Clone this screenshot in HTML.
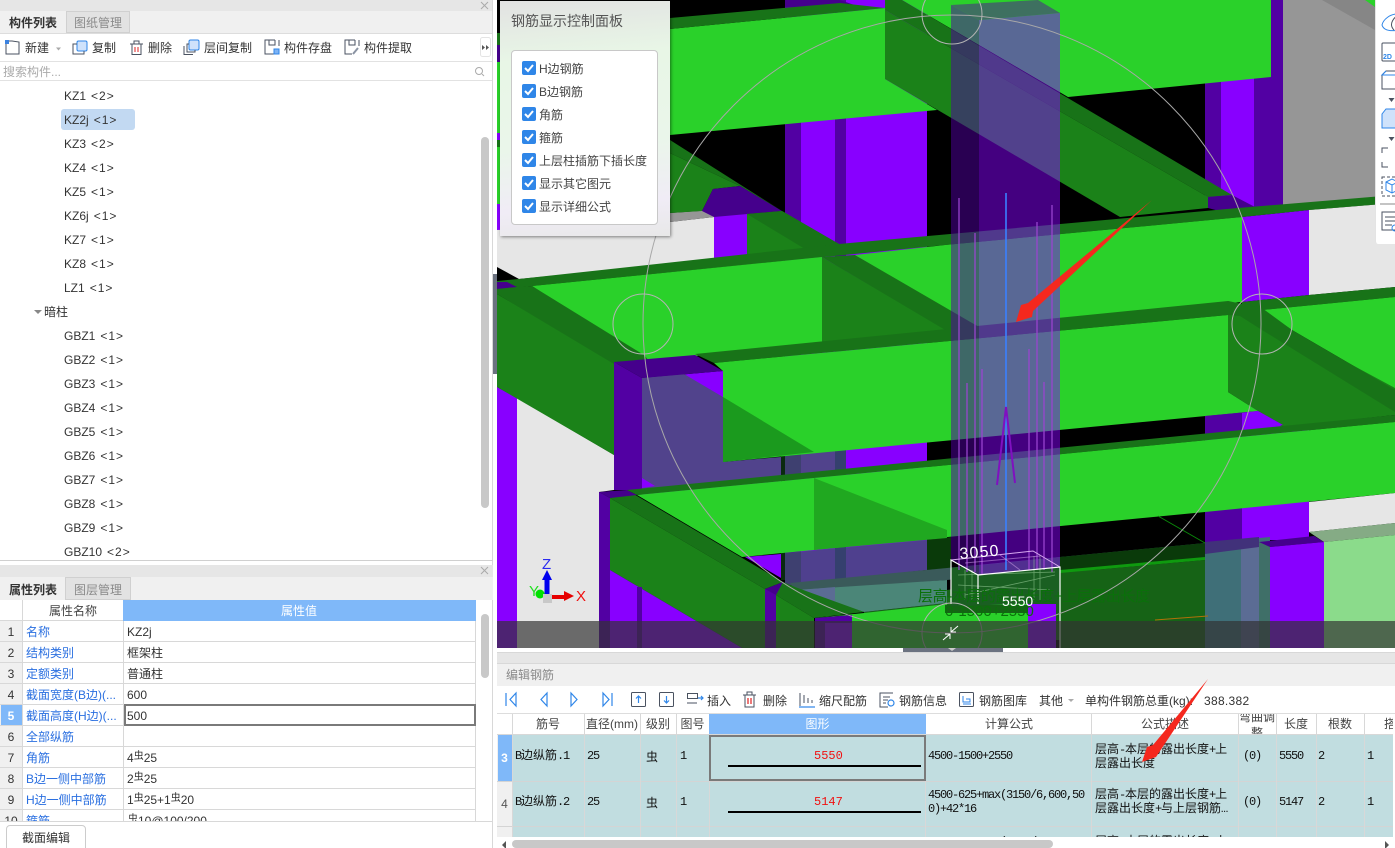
<!DOCTYPE html>
<html><head><meta charset="utf-8"><style>
html,body{margin:0;padding:0;background:#fff}
#r{position:relative;width:1395px;height:848px;overflow:hidden;background:#fff;font-family:"Liberation Sans","Noto Sans CJK SC",sans-serif;font-size:12px;color:#333}
.t{position:absolute;white-space:nowrap;line-height:16px;font-size:12px}
.b{position:absolute}
.tr{color:#333}.tr span{letter-spacing:1px;margin-left:5px}
.bl{color:#2a6fe0}
.cell{position:absolute;white-space:nowrap;font-family:"Liberation Mono","WenQuanYi Zen Hei",monospace;font-size:12px;line-height:14px;color:#111}
.m{letter-spacing:-1.2px}
.hd{position:absolute;top:714px;height:21px;line-height:21px;text-align:center;font-size:12px;color:#444;overflow:hidden}
.cb{position:absolute;left:522px;width:14px;height:14px;background:#2f86e8;border-radius:2px}
.lb{position:absolute;left:539px;font-size:12px;line-height:16px;color:#444;white-space:nowrap}
sup{font-size:10px;line-height:0;vertical-align:3px}
</style></head><body><div id="r">

<svg class="b" style="left:0;top:0" width="1395" height="848" viewBox="0 0 1395 848">
<clipPath id="v"><rect x="497" y="0" width="898" height="648"/></clipPath>
<g clip-path="url(#v)">
<rect x="497" y="0" width="898" height="648" fill="#000"/>
<!-- left sliver -->
<rect x="497" y="33" width="3" height="12" fill="#187318"/>
<rect x="497" y="45" width="3" height="17" fill="#45008c"/>
<rect x="497" y="62" width="3" height="71" fill="#2ad12a"/>
<rect x="497" y="133" width="3" height="7" fill="#8800ff"/>
<rect x="497" y="140" width="3" height="7" fill="#187318"/>
<rect x="497" y="147" width="3" height="57" fill="#2ad12a"/>
<rect x="497" y="204" width="3" height="26" fill="#8800ff"/>
<!-- floors -->
<polygon points="670,222 714,217 714,260 519,279 497,267 497,230" fill="#e6e6e6"/>
<polygon points="670,213 714,210 714,217 670,222" fill="#969696"/>
<polygon points="1283,0 1375,0 1375,197 1283,205" fill="#969696"/>
<polygon points="1322,0 1375,0 1375,30" fill="#868686"/>
<polygon points="1365,0 1375,0 1375,7" fill="#2ad12a"/>
<polygon points="1283,205 1375,197 1395,195 1395,203 1309,210" fill="#868686"/>
<polygon points="1309,210 1395,203 1395,287 1309,295" fill="#e6e6e6"/>
<polygon points="1309,502 1395,493 1395,523 1309,532" fill="#e6e6e6"/>
<polygon points="1309,532 1395,523 1395,535 1324,542" fill="#85ab85"/>
<polygon points="1324,542 1395,535 1395,648 1324,648" fill="#8bdb8b"/>
<polygon points="517,398 614,455 614,490 599,492 599,648 517,648" fill="#e6e6e6"/>
<polygon points="497,387 517,398 517,648 497,648" fill="#8800ff"/>
<!-- columns -->
<rect x="785" y="0" width="16" height="560" fill="#5200a3"/>
<rect x="801" y="0" width="34" height="560" fill="#8800ff"/>
<rect x="835" y="0" width="11" height="560" fill="#5200a3"/>
<rect x="846" y="0" width="81" height="560" fill="#8800ff"/>
<polygon points="785,0 840,0 860,7 785,7" fill="#45008c"/>
<rect x="1205" y="0" width="16" height="208" fill="#5200a3"/>
<rect x="1221" y="0" width="33" height="208" fill="#8800ff"/>
<rect x="1254" y="0" width="29" height="208" fill="#5200a3"/>
<rect x="1205" y="410" width="37" height="135" fill="#5200a3"/>
<rect x="1242" y="405" width="67" height="135" fill="#8800ff"/>
<rect x="714" y="213" width="33" height="47" fill="#8800ff"/>
<polygon points="1242,217 1309,210 1309,295 1242,302" fill="#8800ff"/>
<!-- upper cross-beam -->
<polygon points="670,153 740,186 713,189 702,211 670,213" fill="#1b8219"/>
<polygon points="670,140 782,211 740,186 670,153" fill="#187318"/>
<polygon points="713,189 740,186 782,211 714,217 702,211" fill="#45008c"/>
<polygon points="747,214 782,211 839,244 822,257 747,262" fill="#1b8219"/>
<polygon points="747,214 782,211 839,244 810,252" fill="#187318"/>
<!-- Beam A -->
<polygon points="670,29 885,8 885,79 937,110 670,135" fill="#2ad12a"/>
<polygon points="670,18 840,3 885,8 670,29" fill="#187318"/>
<polygon points="902,0 1271,0 1271,77 1068,97" fill="#2ad12a"/>
<rect x="1271" y="0" width="12" height="78" fill="#5200a3"/>
<polygon points="885,10 885,79 1120,217 1208,208 1208,197" fill="#1b8219"/>
<polygon points="885,0 902,0 1232,195 1208,197 885,10" fill="#187318"/>
<polygon points="1208,197 1232,195 1255,207 1308,203 1309,210 1242,217 1208,208" fill="#45008c"/>
<!-- Beam B band & tops -->
<polygon points="519,279 839,244 1238,208 1395,195 1395,203 1309,210 1242,217 945,245 532,286 497,290 497,281" fill="#187318"/>
<polygon points="497,282 507,282 517,287 497,289" fill="#45008c"/>
<polygon points="532,286 822,257 822,343 695,356 644,361" fill="#2ad12a"/>
<polygon points="822,257 947,330 822,343" fill="#1b8219"/>
<polygon points="822,257 855,255 947,307 979,327 947,331" fill="#187318"/>
<polygon points="855,255 945,245 1242,217 1242,302 979,327" fill="#2ad12a"/>
<polygon points="1242,302 1309,295 1395,287 1395,297 1262,310 1242,316" fill="#187318"/>
<polygon points="1262,310 1395,297 1395,390 1292,330" fill="#2ad12a"/>
<!-- left cross beam -->
<polygon points="497,294 614,362 614,455 497,387" fill="#1b8219"/>
<polygon points="497,289 532,286 644,355 650,362 614,364 497,294" fill="#187318"/>
<!-- left column -->
<polygon points="614,362 642,378 642,490 614,490" fill="#5200a3"/>
<polygon points="642,378 723,371 723,470 642,480" fill="#8800ff"/>
<polygon points="642,378 684,374 723,397 723,462 781,457 781,482 642,495" fill="#51438c"/>
<polygon points="614,362 695,355 723,371 642,378" fill="#45008c"/>
<rect x="781" y="455" width="4" height="25" fill="#0a2a10"/>
<rect x="785" y="450" width="16" height="30" fill="#3e4070"/>
<rect x="801" y="450" width="34" height="30" fill="#51438c"/>
<rect x="835" y="450" width="11" height="30" fill="#35406e"/>
<polygon points="642,478 655,486 642,488" fill="#8800ff"/>
<!-- Beam C -->
<polygon points="695,354 1228,301 1228,315 714,363" fill="#187318"/>
<polygon points="714,363 1228,315 1228,392 1258,411 723,462 723,371" fill="#2ad12a"/>
<polygon points="723,397 814,452 723,462" fill="#1b9a1e"/>
<polygon points="1228,301 1262,310 1250,310 1395,388 1395,415 1283,427 1228,392" fill="#1b8219"/>
<polygon points="1228,301 1262,308 1292,330 1395,390 1395,412 1262,330 1240,316 1228,315" fill="#187318"/>
<polygon points="1205,416 1258,411 1283,425 1205,433" fill="#5200a3"/>
<polygon points="1242,413 1258,411 1283,425 1242,430" fill="#8800ff"/>
<!-- lower region under beam D -->
<rect x="781" y="550" width="4" height="30" fill="#0a2a10"/>
<polygon points="745,557 781,554 781,578" fill="#8800ff"/>
<polygon points="785,553 927,540 927,570 785,585" fill="#4f408e"/>
<polygon points="785,553 801,552 801,585 785,585" fill="#3e4070"/>
<polygon points="835,548 846,547 846,580 835,580" fill="#35406e"/>
<polygon points="927,540 951,537 951,568 927,570" fill="#0a3a0a"/>
<polygon points="790,583 947,568 1060,557 1205,543 1205,554 947,580 795,592" fill="#3a5a5a"/>
<polygon points="1060,557 1205,543 1205,560 1060,573" fill="#0a3a0a"/>
<polygon points="1060,573 1205,560 1205,621 1060,640 864,640 864,612 947,603 947,590" fill="#166316"/>
<polygon points="795,590 947,580 947,603 864,612" fill="#4b8678"/>
<polygon points="801,590 835,587 835,604 801,592" fill="#5b6c94"/>
<polygon points="814,618 864,613 947,604 1028,597 1028,621 1028,648 852,648 852,615" fill="#2ad12a"/>
<polygon points="947,597 1060,586 1060,596 947,610" fill="#1b6a1b"/>
<rect x="945" y="605" width="83" height="8" fill="#166316"/>
<rect x="1060" y="570" width="145" height="80" fill="#166316"/>
<polygon points="1060,573 1205,560 1205,557 1060,570" fill="#0f9a0f"/>
<polygon points="951,568 1060,557 1060,615 1028,615 1028,604 951,606" fill="#1a5f22"/>
<!-- right lower column overlay -->
<polygon points="1205,543 1270,537 1270,648 1205,648" fill="#3f6f78"/>
<rect x="1241" y="541" width="18" height="107" fill="#5b6c94"/>
<polygon points="1205,542 1259,537 1259,547 1205,554" fill="#41317a"/>
<rect x="1259" y="542" width="11" height="106" fill="#3f6f68"/>
<polygon points="1259,542 1314,536 1324,542 1270,547" fill="#45008c"/>
<polygon points="1270,547 1324,542 1324,648 1270,648" fill="#8800ff"/>
<!-- bottom-left cross beam D side -->
<polygon points="610,498 610,570 742,648 765,648 765,589" fill="#1b8219"/>
<polygon points="610,498 627,490 783,582 765,589" fill="#187318"/>
<polygon points="599,492 610,498 610,648 599,648" fill="#5200a3"/>
<polygon points="599,492 627,490 637,495 610,498" fill="#45008c"/>
<polygon points="610,570 742,648 610,648" fill="#8800ff"/>
<rect x="637" y="587" width="5" height="61" fill="#5200a3"/>
<rect x="765" y="589" width="11" height="59" fill="#5200a3"/>
<polygon points="765,589 783,582 795,592 776,595" fill="#45008c"/>
<polygon points="776,595 814,618 814,648 776,648" fill="#1b8219"/>
<polygon points="783,582 795,587 864,612 814,618 776,595" fill="#187318"/>
<polygon points="815,618 852,615 852,648 815,648" fill="#5200a3"/>
<rect x="825" y="623" width="27" height="25" fill="#8800ff"/>
<rect x="1028" y="604" width="28" height="44" fill="#8800ff"/>
<!-- Beam D -->
<polygon points="627,490 1395,415 1395,422 637,495" fill="#187318"/>
<polygon points="637,495 1395,422 1395,493 1205,512 742,557" fill="#2ad12a"/>
<polygon points="814,478 947,530 947,538 814,550" fill="#20a820"/>
<line x1="1158" y1="516" x2="1205" y2="543" stroke="#0a8a0a"/>
<line x1="1155" y1="620" x2="1208" y2="616" stroke="#b0700a"/>
<!-- main translucent column -->
<polygon points="951,5 979,20 979,575 951,560" fill="rgba(82,0,163,.5)"/>
<polygon points="979,20 1060,13 1060,567 979,575" fill="rgba(136,0,255,.5)"/>
<polygon points="951,5 1038,0 1060,13 979,20" fill="#3e7060"/>
<!-- rebars -->
<g stroke="#9a45d0" stroke-width="1.5" opacity=".85">
<line x1="959" y1="198" x2="959" y2="570"/><line x1="975" y1="233" x2="975" y2="572"/>
<line x1="967" y1="383" x2="967" y2="572"/><line x1="982" y1="369" x2="982" y2="575"/>
<line x1="1029" y1="349" x2="1029" y2="570"/><line x1="1037" y1="222" x2="1037" y2="570"/>
<line x1="1044" y1="382" x2="1044" y2="570"/><line x1="1052" y1="205" x2="1052" y2="572"/>
</g>
<line x1="1006" y1="193" x2="1006" y2="570" stroke="#3a80ff" stroke-width="1.6"/>
<polyline points="997,485 1006,407 1015,483" fill="none" stroke="#8010c0" stroke-width="2"/>
<!-- hatch -->
<g stroke="#9ad09a" stroke-width=".8" opacity=".6">
<line x1="958" y1="575" x2="1055" y2="572"/><line x1="958" y1="585" x2="1050" y2="590"/>
<line x1="965" y1="595" x2="1055" y2="575"/><line x1="1034" y1="556" x2="1034" y2="600"/><line x1="1040" y1="556" x2="1040" y2="600"/>
<line x1="965" y1="570" x2="965" y2="600"/><line x1="972" y1="570" x2="972" y2="600"/>
</g>
<g stroke="#d8a8f0" stroke-width="1" fill="none">
<polyline points="951,560 1033,551 1060,567"/>
<line x1="965" y1="563" x2="1040" y2="556" opacity=".5"/><line x1="1000" y1="555" x2="1020" y2="570" opacity=".5"/>
</g>
<g stroke="#fff" stroke-width="1.2" fill="none">
<polyline points="951,604 951,560 978,575 1060,567 1060,648"/>
<line x1="978" y1="575" x2="978" y2="604"/>
</g>
<text x="918" y="601" font-size="15" fill="#0a700a" font-family="Liberation Sans,Noto Sans CJK SC,sans-serif" textLength="232">层高-本层的露出长度+上层露出长度</text>
<text x="945" y="616" font-size="15" fill="#0a700a" font-family="Liberation Sans,sans-serif">0-1500+2550</text>
<text x="960" y="559" font-size="16" fill="#fff" font-family="Liberation Sans,sans-serif" transform="rotate(-5 960 559)" textLength="40" letter-spacing="1">3050</text>
<text x="1002" y="606" font-size="14" fill="#fff" font-family="Liberation Sans,sans-serif">5550</text>
<!-- small circles -->
<g fill="none" stroke="#b4b4b4" stroke-width="1">
<circle cx="952" cy="324" r="309" stroke="#a8a8a8"/>
<circle cx="643" cy="324" r="30"/><circle cx="952" cy="14" r="30"/><circle cx="1262" cy="324" r="30"/><circle cx="952" cy="633" r="30"/>
</g>
<!-- axes -->
<rect x="544.500" y="575" width="5" height="20" fill="#0000ee"/>
<polygon points="547,570 552,580 542,580" fill="#0000ee"/>
<rect x="552" y="595" width="14" height="4" fill="#e60000"/>
<polygon points="574,596 564,591 564,601" fill="#e60000"/>
<circle cx="540" cy="594" r="4.500" fill="#00e000"/>
<rect x="543" y="594" width="9" height="9" fill="#c8c8c8"/>
<text x="542" y="569" font-size="15" fill="#2a2af0" font-family="Liberation Sans,sans-serif">Z</text>
<text x="529" y="596" font-size="15" fill="#20e020" font-family="Liberation Sans,sans-serif">Y</text>
<text x="576" y="601" font-size="15" fill="#f01010" font-family="Liberation Sans,sans-serif">X</text>
<!-- bottom bar -->
<rect x="497" y="621" width="898" height="27" fill="rgba(51,51,51,.69)"/>
<g stroke="#fff" stroke-width="1" fill="none">
<path d="M958 626 L951 632 M951 627 V632 H956"/>
<path d="M943 640 L950 634 M950 639 V634 H945"/>
</g>
</g>
<!-- red arrows -->
<polygon points="1152,200 1033,311 1032,317 1016,322 1021,305 1028,303" fill="#f5281e"/>
</svg>

<!-- LEFT TOP PANEL -->
<div class="b" style="left:0;top:0;width:493px;height:11px;background:#e6e6e6;border-bottom:1px solid #d8d8d8"></div>
<div class="b" style="left:0;top:11px;width:493px;height:22px;background:#f0f0f0"></div>
<div class="b" style="left:66px;top:11px;width:64px;height:22px;background:#e2e2e2;border:1px solid #d0d0d0;box-sizing:border-box"></div>
<div class="t" style="left:9px;top:15px;font-weight:bold;color:#333">构件列表</div>
<div class="t" style="left:74px;top:15px;color:#8a8a8a">图纸管理</div>
<div class="b" style="left:0;top:33px;width:493px;height:1px;background:#ddd"></div>
<div class="b" style="left:0;top:61px;width:493px;height:1px;background:#e2e2e2"></div>
<div class="b" style="left:0;top:80px;width:493px;height:1px;background:#e2e2e2"></div>
<div class="b" style="left:492px;top:0;width:1px;height:848px;background:#d8d8d8"></div>
<div class="b" style="left:493px;top:274px;width:4px;height:100px;background:#6b7280"></div>
<div class="t" style="left:25px;top:40px">新建</div>
<div class="t" style="left:92px;top:40px">复制</div>
<div class="t" style="left:148px;top:40px">删除</div>
<div class="t" style="left:204px;top:40px">层间复制</div>
<div class="t" style="left:284px;top:40px">构件存盘</div>
<div class="t" style="left:364px;top:40px">构件提取</div>
<div class="t" style="left:3px;top:64px;color:#aaa">搜索构件...</div>
<svg class="b" style="left:0;top:34px" width="493" height="46" viewBox="0 34 493 46" fill="none" stroke="#4a5260" stroke-width="1">
<path d="M8 41H12L19 42V54H6V42" /><rect x="5" y="40" width="4" height="4" fill="#3b82e0" stroke="none"/>
<path d="M56 47.500h5l-2.500 3z" fill="#aaa" stroke="none"/>
<rect x="77" y="41" width="10" height="10" rx="1.500" fill="#cfe2fb" stroke="#2f86e8"/><path d="M77 44H73V54H84V51"/>
<path d="M130 44H143M132 44V54.500H141V44M134 44V41H139V44"/><path d="M135 47V52M138 47V52" stroke="#e02020"/>
<rect x="189" y="40" width="10" height="10" rx="1.500" fill="#cfe2fb" stroke="#2f86e8"/><path d="M189 44H187V52H195V50M184 46V54.500H193"/>
<path d="M275 40H265V54H274M269 40V45H275V40M279 40V46"/><rect x="274" y="49" width="5" height="5" fill="#7db3f5" stroke="#2f86e8"/>
<path d="M355 40H345V54H352M349 40V45H355V40M359 40V46"/><path d="M353 54L358 48" stroke="#8a93a3" stroke-width="2"/>
<rect x="480.500" y="37.500" width="10" height="19" rx="2" stroke="#e4e4e4"/><path d="M482 45l3 2.500-3 2.500zM486 45l3 2.500-3 2.500z" fill="#555" stroke="none"/>
<circle cx="479" cy="71" r="3.500" stroke="#aaa"/><path d="M482 74l2 2" stroke="#aaa"/>
</svg>
<svg class="b" style="left:480px;top:1px" width="10" height="10" stroke="#aaa"><path d="M1 1L8 8M8 1L1 8"/></svg>
<div class="b" style="left:61px;top:109px;width:74px;height:21px;background:#c2d9f2;border-radius:3px"></div>
<div class="t tr" style="left:64px;top:88px">KZ1<span>&lt;2&gt;</span></div>
<div class="t tr" style="left:64px;top:112px">KZ2j<span>&lt;1&gt;</span></div>
<div class="t tr" style="left:64px;top:136px">KZ3<span>&lt;2&gt;</span></div>
<div class="t tr" style="left:64px;top:160px">KZ4<span>&lt;1&gt;</span></div>
<div class="t tr" style="left:64px;top:184px">KZ5<span>&lt;1&gt;</span></div>
<div class="t tr" style="left:64px;top:208px">KZ6j<span>&lt;1&gt;</span></div>
<div class="t tr" style="left:64px;top:232px">KZ7<span>&lt;1&gt;</span></div>
<div class="t tr" style="left:64px;top:256px">KZ8<span>&lt;1&gt;</span></div>
<div class="t tr" style="left:64px;top:280px">LZ1<span>&lt;1&gt;</span></div>
<div class="b" style="left:34px;top:310px;width:0;height:0;border-left:4px solid transparent;border-right:4px solid transparent;border-top:4px solid #888"></div>
<div class="t tr" style="left:44px;top:304px">暗柱</div>
<div class="t tr" style="left:64px;top:328px">GBZ1<span>&lt;1&gt;</span></div>
<div class="t tr" style="left:64px;top:352px">GBZ2<span>&lt;1&gt;</span></div>
<div class="t tr" style="left:64px;top:376px">GBZ3<span>&lt;1&gt;</span></div>
<div class="t tr" style="left:64px;top:400px">GBZ4<span>&lt;1&gt;</span></div>
<div class="t tr" style="left:64px;top:424px">GBZ5<span>&lt;1&gt;</span></div>
<div class="t tr" style="left:64px;top:448px">GBZ6<span>&lt;1&gt;</span></div>
<div class="t tr" style="left:64px;top:472px">GBZ7<span>&lt;1&gt;</span></div>
<div class="t tr" style="left:64px;top:496px">GBZ8<span>&lt;1&gt;</span></div>
<div class="t tr" style="left:64px;top:520px">GBZ9<span>&lt;1&gt;</span></div>
<div class="t tr" style="left:64px;top:544px">GBZ10<span>&lt;2&gt;</span></div>
<div class="b" style="left:481px;top:137px;width:8px;height:371px;background:#c8c8c8;border-radius:4px"></div>
<div class="b" style="left:0;top:560px;width:493px;height:1px;background:#d0d0d0"></div>

<!-- LEFT BOTTOM PANEL -->
<div class="b" style="left:0;top:565px;width:493px;height:12px;background:#e6e6e6"></div>
<svg class="b" style="left:480px;top:566px" width="10" height="10" stroke="#aaa"><path d="M1 1L8 8M8 1L1 8"/></svg>
<div class="b" style="left:0;top:577px;width:493px;height:23px;background:#f0f0f0"></div>
<div class="b" style="left:65px;top:577px;width:66px;height:23px;background:#e2e2e2;border:1px solid #d0d0d0;box-sizing:border-box"></div>
<div class="t" style="left:9px;top:582px;color:#333;font-weight:bold">属性列表</div>
<div class="t" style="left:74px;top:582px;color:#8a8a8a">图层管理</div>
<div class="b" style="left:123px;top:600px;width:353px;height:21px;background:#7fb8f9"></div>
<div class="t" style="left:49px;top:603px;color:#444">属性名称</div>
<div class="t" style="left:281px;top:603px;color:#fff">属性值</div>
<div class="b" style="left:0;top:621px;width:22px;height:200px;background:#f0f0f0"></div>
<div class="b" style="left:1px;top:704px;width:21px;height:21px;background:#7fb8f9"></div>
<div class="b" style="left:22px;top:600px;width:1px;height:221px;background:#d8d8d8"></div>
<div class="b" style="left:123px;top:621px;width:1px;height:200px;background:#d8d8d8"></div>
<div class="b" style="left:475px;top:621px;width:1px;height:200px;background:#d8d8d8"></div>
<div class="b" style="left:0;top:620px;width:123px;height:1px;background:#d8d8d8"></div>
<div class="b" style="left:0;top:641px;width:476px;height:1px;background:#d8d8d8"></div>
<div class="b" style="left:0;top:662px;width:476px;height:1px;background:#d8d8d8"></div>
<div class="b" style="left:0;top:683px;width:476px;height:1px;background:#d8d8d8"></div>
<div class="b" style="left:0;top:704px;width:476px;height:1px;background:#d8d8d8"></div>
<div class="b" style="left:0;top:725px;width:476px;height:1px;background:#d8d8d8"></div>
<div class="b" style="left:0;top:746px;width:476px;height:1px;background:#d8d8d8"></div>
<div class="b" style="left:0;top:767px;width:476px;height:1px;background:#d8d8d8"></div>
<div class="b" style="left:0;top:788px;width:476px;height:1px;background:#d8d8d8"></div>
<div class="b" style="left:0;top:809px;width:476px;height:1px;background:#d8d8d8"></div>
<div class="b" style="left:124px;top:704px;width:352px;height:22px;border:2px solid #7a7a7a;box-sizing:border-box;background:#fff"></div>
<div style="position:absolute;left:0;top:600px;width:493px;height:221px;overflow:hidden">
<div class="t" style="left:0;width:22px;text-align:center;top:24px">1</div>
<div class="t" style="left:0;width:22px;text-align:center;top:45px">2</div>
<div class="t" style="left:0;width:22px;text-align:center;top:66px">3</div>
<div class="t" style="left:0;width:22px;text-align:center;top:87px">4</div>
<div class="t" style="left:0;width:22px;text-align:center;top:108px;color:#fff;font-weight:bold">5</div>
<div class="t" style="left:0;width:22px;text-align:center;top:129px">6</div>
<div class="t" style="left:0;width:22px;text-align:center;top:150px">7</div>
<div class="t" style="left:0;width:22px;text-align:center;top:171px">8</div>
<div class="t" style="left:0;width:22px;text-align:center;top:192px">9</div>
<div class="t" style="left:0;width:22px;text-align:center;top:213px">10</div>
<div class="t bl" style="left:26px;top:24px">名称</div>
<div class="t bl" style="left:26px;top:45px">结构类别</div>
<div class="t bl" style="left:26px;top:66px">定额类别</div>
<div class="t bl" style="left:26px;top:87px">截面宽度(B边)(...</div>
<div class="t bl" style="left:26px;top:108px">截面高度(H边)(...</div>
<div class="t bl" style="left:26px;top:129px">全部纵筋</div>
<div class="t bl" style="left:26px;top:150px">角筋</div>
<div class="t bl" style="left:26px;top:171px">B边一侧中部筋</div>
<div class="t bl" style="left:26px;top:192px">H边一侧中部筋</div>
<div class="t bl" style="left:26px;top:213px">箍筋</div>
<div class="t" style="left:127px;top:24px">KZ2j</div>
<div class="t" style="left:127px;top:45px">框架柱</div>
<div class="t" style="left:127px;top:66px">普通柱</div>
<div class="t" style="left:127px;top:87px">600</div>
<div class="t" style="left:127px;top:108px">500</div>
<div class="t" style="left:127px;top:150px">4<sup>虫</sup>25</div>
<div class="t" style="left:127px;top:171px">2<sup>虫</sup>25</div>
<div class="t" style="left:127px;top:192px">1<sup>虫</sup>25+1<sup>虫</sup>20</div>
<div class="t" style="left:128px;top:213px"><sup>虫</sup>10@100/200</div>
</div>
<div class="b" style="left:481px;top:614px;width:8px;height:64px;background:#c8c8c8;border-radius:4px"></div>
<div class="b" style="left:0;top:821px;width:493px;height:1px;background:#d8d8d8"></div>
<div class="b" style="left:6px;top:825px;width:80px;height:30px;border:1px solid #ccc;border-radius:4px;box-sizing:border-box;background:#fff"></div>
<div class="t" style="left:22px;top:830px">截面编辑</div>

<!-- CONTROL PANEL -->
<div class="b" style="left:499.500px;top:1px;width:170px;height:235px;background:linear-gradient(175deg,#e2e2e2 0%,#e8f6e6 25%,#eaf6ea 60%,#f0ecf6 85%,#e8e8e8 100%);box-shadow:1px 1px 3px rgba(0,0,0,.45)"></div>
<div class="b" style="left:511px;top:50px;width:147px;height:175px;background:#fff;border:1px solid #c8c8c8;border-radius:4px;box-sizing:border-box"></div>
<div class="t" style="left:511px;top:13px;font-size:14px;color:#555">钢筋显示控制面板</div>
<div class="cb" style="top:61px"></div><div class="lb" style="top:61px">H边钢筋</div>
<div class="cb" style="top:84px"></div><div class="lb" style="top:84px">B边钢筋</div>
<div class="cb" style="top:107px"></div><div class="lb" style="top:107px">角筋</div>
<div class="cb" style="top:130px"></div><div class="lb" style="top:130px">箍筋</div>
<div class="cb" style="top:153px"></div><div class="lb" style="top:153px">上层柱插筋下插长度</div>
<div class="cb" style="top:176px"></div><div class="lb" style="top:176px">显示其它图元</div>
<div class="cb" style="top:199px"></div><div class="lb" style="top:199px">显示详细公式</div>
<svg class="b" style="left:522px;top:61px" width="14" height="152" fill="none" stroke="#fff" stroke-width="2">
<path d="M3 7l3 3 5-6"/><path d="M3 30l3 3 5-6"/><path d="M3 53l3 3 5-6"/><path d="M3 76l3 3 5-6"/><path d="M3 99l3 3 5-6"/><path d="M3 122l3 3 5-6"/><path d="M3 145l3 3 5-6"/>
</svg>

<!-- RIGHT TOOLBAR -->
<div class="b" style="left:1375px;top:0;width:20px;height:244px;background:#fff;border-radius:0 0 0 3px;border-left:1px solid #e4e4e4;box-sizing:border-box"></div>
<svg class="b" style="left:1379.500px;top:0" width="15.500" height="244" fill="none" stroke="#4a5260" stroke-width="1">
<path d="M20 14C10 13 3 20 2 25C4 32 14 31 20 30" stroke="#2f86e8"/><path d="M20 14C14 17 8 24 14 30" stroke="#4a5260"/>
<path d="M20 43H3Q2 43 2 44V60Q2 61 3 61H20"/><text x="3" y="59" font-size="7" font-weight="bold" fill="#2f86e8" stroke="none" font-family="Liberation Sans,sans-serif">2D</text>
<path d="M20 71H6L2 75V89H20" /><path d="M6 71L2 75H20" stroke="#2f86e8"/>
<path d="M8.500 98h6l-3 4z" fill="#4a5260" stroke="none"/>
<path d="M20 109H6L2 114V128H20Z" fill="#cfe2fb" stroke="#2f86e8"/>
<path d="M8.500 137h6l-3 4z" fill="#4a5260" stroke="none"/>
<path d="M8 148H2V153M2 162V167H8" />
<rect x="2" y="177" width="22" height="19" stroke-dasharray="3 2"/><path d="M6 182L12 179L18 182V190L12 193L6 190ZM6 182L12 185L18 182M12 185V193" stroke="#2f86e8"/>
<line x1="-4" y1="204" x2="16" y2="204" stroke="#888"/>
<path d="M20 212H2V230H20M5 217h12M5 221h12M5 225h7"/><circle cx="15" cy="228" r="3" stroke="#2f86e8"/>
</svg>

<!-- BOTTOM HANDLE -->
<div class="b" style="left:903px;top:648px;width:100px;height:4px;background:#6b7280"></div>
<div class="b" style="left:497px;top:648px;width:406px;height:4px;background:#fff"></div>
<div class="b" style="left:1003px;top:648px;width:392px;height:4px;background:#fff"></div>
<div class="b" style="left:948px;top:648px;width:0;height:0;border-left:4px solid transparent;border-right:4px solid transparent;border-top:3px solid #ccc"></div>

<!-- BOTTOM PANEL -->
<div class="b" style="left:497px;top:652px;width:898px;height:12px;background:#e6e6e6;border-top:1px solid #d8d8d8;border-bottom:1px solid #d8d8d8;box-sizing:border-box"></div>
<div class="b" style="left:497px;top:664px;width:898px;height:22px;background:#f0f0f0"></div>
<div class="t" style="left:506px;top:667px;color:#8a8a8a">编辑钢筋</div>
<div class="b" style="left:497px;top:686px;width:898px;height:28px;background:#fff"></div>
<div class="b" style="left:497px;top:713px;width:898px;height:1px;background:#ddd"></div>
<svg class="b" style="left:497px;top:686px" width="500" height="28" viewBox="497 686 500 28" fill="none" stroke="#2f86e8" stroke-width="1.2">
<path d="M506 693V706M516 693L510 699.500L516 706Z"/>
<path d="M547 693L541 699.500L547 706Z"/>
<path d="M571 693L577 699.500L571 706Z"/>
<path d="M603 693L609 699.500L603 706ZM612 693V706"/>
<g stroke="#4a5260" stroke-width="1"><rect x="631.500" y="692.500" width="14" height="14" rx="1"/><rect x="659.500" y="692.500" width="14" height="14" rx="1"/></g>
<path d="M638.500 703V696M636 698.500l2.500-2.500 2.500 2.500M666.500 696V703M664 700.500l2.500 2.500 2.500-2.500"/>
<g stroke="#4a5260" stroke-width="1"><rect x="687.500" y="693.500" width="10" height="5"/><path d="M687 703H697"/></g><path d="M698 698h5M701 696l2 2-2 2"/>
<g stroke="#4a5260" stroke-width="1"><path d="M743 695H756M745 695V707H754V695M747 695V692H752V695"/></g><path d="M748 698V704M751 698V704" stroke="#e02020"/>
<path d="M800 693V706M804 695V703M808 698V703M812 700V703" stroke="#4a5260" stroke-width="1"/><path d="M799 707H815"/>
<path d="M893 693H880V707H888M883 697h7M883 700h5M883 703h3" stroke="#4a5260" stroke-width="1"/><circle cx="891" cy="703" r="3"/>
</svg>
<svg class="b" style="left:958px;top:691px" width="18" height="18" fill="none" stroke="#4a5260"><rect x="1.500" y="1.500" width="14" height="14" rx="1"/><path d="M5 5V11H12V8H8M5 13h8" stroke="#2f86e8"/></svg>
<div class="t" style="left:707px;top:693px">插入</div>
<div class="t" style="left:763px;top:693px">删除</div>
<div class="t" style="left:819px;top:693px">缩尺配筋</div>
<div class="t" style="left:899px;top:693px">钢筋信息</div>
<div class="t" style="left:979px;top:693px">钢筋图库</div>
<div class="t" style="left:1039px;top:693px">其他</div>
<div class="b" style="left:1068px;top:699px;width:0;height:0;border-left:3px solid transparent;border-right:3px solid transparent;border-top:3px solid #aaa"></div>
<div class="t" style="left:1085px;top:693px">单构件钢筋总重(kg):</div>
<div class="t" style="left:1204px;top:693px;letter-spacing:.3px">388.382</div>

<!-- Table -->
<div class="b" style="left:497px;top:714px;width:898px;height:21px;background:#fff"></div>
<div class="b" style="left:709px;top:714px;width:217px;height:21px;background:#7fb8f9"></div>
<div class="hd" style="left:512px;width:72px">筋号</div>
<div class="hd" style="left:584px;width:56px">直径(mm)</div>
<div class="hd" style="left:640px;width:36px">级别</div>
<div class="hd" style="left:676px;width:33px">图号</div>
<div class="hd" style="left:709px;width:217px;color:#fff">图形</div>
<div class="hd" style="left:926px;width:166px">计算公式</div>
<div class="hd" style="left:1092px;width:146px">公式描述</div>
<div class="hd" style="left:1238px;width:38px;line-height:16px;height:21px"><div style="margin-top:-5px">弯曲调<br>整</div></div>
<div class="hd" style="left:1276px;width:40px">长度</div>
<div class="hd" style="left:1316px;width:48px">根数</div>
<div class="hd" style="left:1364px;width:29px;text-align:left;padding-left:20px;box-sizing:border-box;overflow:visible">搭</div>

<div class="b" style="left:497px;top:735px;width:15px;height:102px;background:#f0f0f0"></div>
<div class="b" style="left:498px;top:735px;width:14px;height:46px;background:#7fb8f9"></div>
<div class="b" style="left:512px;top:735px;width:881px;height:102px;background:#c1dde0"></div>
<div class="b" style="left:1393px;top:714px;width:2px;height:134px;background:#fff"></div>
<div class="b" style="left:497px;top:781px;width:896px;height:1px;background:#d4d4d4"></div>
<div class="b" style="left:497px;top:826px;width:896px;height:1px;background:#d4d4d4"></div>
<div class="b" style="left:512px;top:714px;width:1px;height:123px;background:#d8d8d8"></div>
<div class="b" style="left:584px;top:714px;width:1px;height:123px;background:#d8d8d8"></div>
<div class="b" style="left:640px;top:714px;width:1px;height:123px;background:#d8d8d8"></div>
<div class="b" style="left:676px;top:714px;width:1px;height:123px;background:#d8d8d8"></div>
<div class="b" style="left:709px;top:735px;width:1px;height:102px;background:#d8d8d8"></div>
<div class="b" style="left:925px;top:735px;width:1px;height:102px;background:#d8d8d8"></div>
<div class="b" style="left:1091px;top:714px;width:1px;height:123px;background:#d8d8d8"></div>
<div class="b" style="left:1238px;top:714px;width:1px;height:123px;background:#d8d8d8"></div>
<div class="b" style="left:1276px;top:714px;width:1px;height:123px;background:#d8d8d8"></div>
<div class="b" style="left:1316px;top:714px;width:1px;height:123px;background:#d8d8d8"></div>
<div class="b" style="left:1364px;top:714px;width:1px;height:123px;background:#d8d8d8"></div>
<div class="b" style="left:497px;top:734px;width:896px;height:1px;background:#d8d8d8"></div>
<div class="b" style="left:709px;top:735px;width:217px;height:46px;border:2px solid #7a7a7a;box-sizing:border-box"></div>
<div class="b" style="left:728px;top:765px;width:193px;height:2px;background:#000"></div>
<div class="b" style="left:728px;top:811px;width:193px;height:2px;background:#000"></div>
<div class="t" style="left:497px;width:15px;text-align:center;top:750px;color:#fff;font-weight:bold">3</div>
<div class="t" style="left:497px;width:15px;text-align:center;top:796px;color:#555">4</div>

<div class="cell" style="left:515px;top:749px"><span class="m">B</span>边纵筋<span class="m">.1</span></div>
<div class="cell" style="left:515px;top:795px"><span class="m">B</span>边纵筋<span class="m">.2</span></div>
<div class="cell m" style="left:587px;top:749px">25</div><div class="cell m" style="left:587px;top:795px">25</div>
<div class="cell" style="left:646px;top:751px">虫</div><div class="cell" style="left:646px;top:797px">虫</div>
<div class="cell" style="left:680px;top:749px">1</div><div class="cell" style="left:680px;top:795px">1</div>
<div class="cell" style="left:814px;top:749px;color:#f01010">5550</div>
<div class="cell" style="left:814px;top:795px;color:#f01010">5147</div>
<div class="cell m" style="left:928px;top:749px">4500-1500+2550</div>
<div class="cell m" style="left:928px;top:788px">4500-625+max(3150/6,600,50<br>0)+42*16</div>
<div class="cell" style="left:1095px;top:743px">层高<span class="m">-</span>本层的露出长度<span class="m">+</span>上<br>层露出长度</div>
<div class="cell" style="left:1095px;top:788px">层高<span class="m">-</span>本层的露出长度<span class="m">+</span>上<br>层露出长度<span class="m">+</span>与上层钢筋…</div>
<div class="cell m" style="left:1243px;top:749px">(0)</div><div class="cell m" style="left:1243px;top:795px">(0)</div>
<div class="cell m" style="left:1279px;top:749px">5550</div><div class="cell m" style="left:1279px;top:795px">5147</div>
<div class="cell" style="left:1318px;top:749px">2</div><div class="cell" style="left:1318px;top:795px">2</div>
<div class="cell" style="left:1367px;top:749px">1</div><div class="cell" style="left:1367px;top:795px">1</div>
<div style="position:absolute;left:512px;top:827px;width:881px;height:10px;overflow:hidden">
<div class="cell m" style="left:416px;top:8px">4500-625+max(3150/6,600,50</div>
<div class="cell" style="left:583px;top:8px">层高<span class="m">-</span>本层的露出长度<span class="m">+</span>上</div>
</div>

<!-- bottom scrollbar -->
<div class="b" style="left:497px;top:837px;width:898px;height:11px;background:#fff"></div>
<div class="b" style="left:512px;top:840px;width:541px;height:8px;background:#c8c8c8;border-radius:4px"></div>
<div class="b" style="left:502px;top:841px;width:0;height:0;border-top:4px solid transparent;border-bottom:4px solid transparent;border-right:4px solid #555"></div>
<div class="b" style="left:1385px;top:841px;width:0;height:0;border-top:4px solid transparent;border-bottom:4px solid transparent;border-left:4px solid #555"></div>

<svg class="b" style="left:1130px;top:670px" width="90" height="100" viewBox="1130 670 90 100">
<polygon points="1208,679 1156,757 1142,762 1147,747 1153,745" fill="#f5281e"/>
</svg>
</div></body></html>
